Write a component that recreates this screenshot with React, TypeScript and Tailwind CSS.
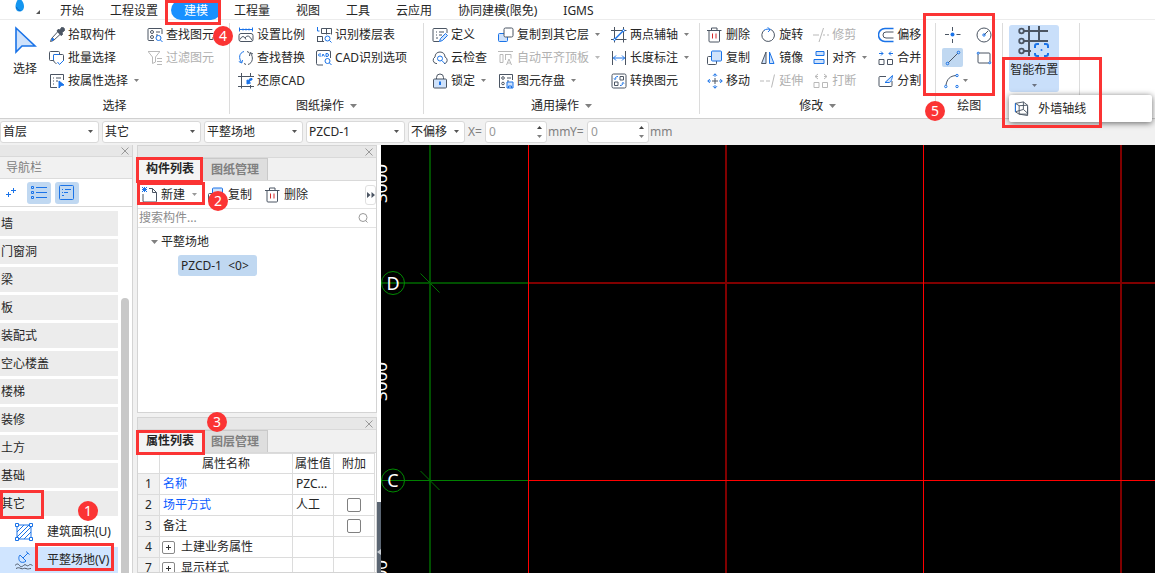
import type { ReactNode } from 'react';

const FONT = "font-['Noto_Sans','Noto_Sans_CJK_SC',sans-serif]";
const D = '#4b5563';
const B = '#1a73e8';
const L = '#cfe2fb';
const G = '#b9b9b9';

const icons: Record<string, ReactNode> = {
  picker: (
    <>
      <path d="M9 4.500l3.500 3.500M8.500 5L2.500 11.500 1.500 14.500l3-1L11 7.500" stroke={D} />
      <path d="M8 4l1-1.500 2 .5L12.500.500 15 1l.500 2.500L13 5.500l.5 2-1.500 1z" fill={D} stroke={D} />
      <path d="M3 11.500l2 .5-2 2z" fill={B} stroke={B} />
    </>
  ),
  batch: (
    <>
      <path d="M4.500 10.500h-3a1 1 0 01-1-1v-7a1 1 0 011-1h8a1 1 0 011 1V4" stroke={D} />
      <path d="M7.500 13.500c-2-.5-3-2-3-4V5.500a1 1 0 011-1h8a1 1 0 011 1v5" stroke={D} />
      <path d="M4.500 10V5.500a1 1 0 011-1h5M8.500 12l2 2.500 4.500-4.500" stroke={B} />
    </>
  ),
  byProp: (
    <>
      <path d="M8 14.500H1.500v-13h13V7M4 5h1M7 5h5M4 8h1M7 8h2M4 11h1" stroke={D} />
      <path d="M10 8l5 4-3 .5-2 2.500z" fill={B} stroke={B} />
    </>
  ),
  find: (
    <>
      <path d="M7 13.500H2a1 1 0 01-1-1v-10a1 1 0 011-1h12a1 1 0 011 1V7M9 5h4M9 8h2" stroke={D} />
      <circle cx="5" cy="5" r="1.500" stroke={D} />
      <circle cx="5" cy="10" r="1.500" stroke={D} />
      <circle cx="11.500" cy="11" r="2.500" stroke={B} />
      <path d="M13.500 13l2 2" stroke={B} />
    </>
  ),
  filter: <path d="M1 1.500h12M1.500 2l4 5v6.500l3-1.500V7l4-5M10 8.500h5M10 11.500h5M10 14.500h5" stroke={G} />,
  scale: (
    <>
      <path d="M1.500.5v4M14.500.5v4M1.500 2.500h13M5 1.500v2M8 1.500v2M11 1.500v2" stroke={B} />
      <path d="M3 6.500h10a2 2 0 012 2v4a2 2 0 01-2 2H3a2 2 0 01-2-2v-4a2 2 0 012-2zM2 12.500q3-6 6 0M7 11q3-5 7 2" stroke={D} />
    </>
  ),
  replace: (
    <>
      <path d="M6 1.500C1 3 .5 8 3.500 12.500M.8 11.500l3 1.500.7-3" stroke={B} />
      <path d="M10 14.500C15 13 15.500 7 12.500 3M15 4l-3-1.500-.5 3.500M9 1.500l2 1M6 13.500l2 1" stroke={D} />
    </>
  ),
  restore: (
    <>
      <path d="M3.500 0v15.500M12.500 0v4M0 3.500h16M0 13.500h16M12.500 12v3.500" stroke={D} />
      <path d="M14 5.500c-2 0-3 .5-3.500 2L9 7v4l3.500-1-1.200-1C12 7.500 13 7 14 7z" fill={B} stroke={B} />
    </>
  ),
  floors: (
    <>
      <path d="M5.500 1.500h10v6M5.500 1.500v5M5.500 6.500h9M10.500 1.500v6M1.500 9.500h5v5h-5M1 14.500h7M1.500 14V9" stroke={D} />
      <path d="M1.500 0v4h2" stroke={B} />
      <circle cx="11.500" cy="11.500" r="2.500" stroke={B} />
      <path d="M13.500 13.500l2 2" stroke={B} />
    </>
  ),
  cad: (
    <>
      <path d="M7 15H2a1.500 1.500 0 01-1.500-1.500V2A1.500 1.500 0 012 .5h11A1.500 1.500 0 0114.500 2v6" stroke={D} />
      <path d="M5 4H3.500a1 1 0 00-1 1v0a1 1 0 001 1H5M6 6.500L7 4l1.500 2.500M10 3.500v3h1a1.500 1.500 0 000-3z" stroke={B} />
      <circle cx="11.500" cy="11" r="2.500" stroke={B} />
      <path d="M13.500 13l2 2" stroke={B} />
    </>
  ),
  define: (
    <>
      <path d="M7 14.500H2a1 1 0 01-1-1v-11a1 1 0 011-1h12a1 1 0 011 1V6M4 5h1M7 5h5M4 8h1M7 8h3M4 11h2" stroke={D} />
      <path d="M7.500 14.500l1-3 5-5 2 2-5 5z" fill={L} stroke={B} />
    </>
  ),
  cloud: (
    <>
      <path d="M5 13.500H4A3.500 3.500 0 013 7C3 4 5 2 8 2s5 2 5 5a3.500 3.500 0 010 6.500h-1" stroke={D} />
      <circle cx="8" cy="8.500" r="2.500" stroke={B} />
      <path d="M9.800 10.500l3 3" stroke={B} />
    </>
  ),
  lock: (
    <>
      <path d="M4.500 6V4.500a3.500 3.500 0 017 0V6" stroke={D} />
      <rect x="1.500" y="6" width="13" height="9" rx="1" fill={L} stroke={D} />
      <path d="M8 8.500v3.500" stroke={B} strokeWidth="2" />
    </>
  ),
  copyTo: (
    <>
      <path d="M6 6.500H1.500a1 1 0 00-1 1v6a1 1 0 001 1h7a1 1 0 001-1V10" fill={L} stroke={B} />
      <rect x="6" y="1" width="9" height="9" rx="1.500" fill="#fff" stroke={D} />
    </>
  ),
  alignTop: <path d="M0 1.500h15M2 4.500h3v8H2zM7.500 4.500H13v4M7.500 4v6M8.500 15l2.500-6 2.500 6M9.500 13h3" stroke={G} />,
  save: (
    <>
      <path d="M7 14.500H1.500v-13h13V7M9 5h4M9 8h2" stroke={D} />
      <circle cx="5" cy="5" r="1.300" stroke={D} />
      <circle cx="5" cy="10.500" r="1.300" stroke={D} />
      <path d="M9 9h6v6H9z" fill={L} stroke={B} />
      <path d="M10.500 15v-2h3v2" stroke={B} />
    </>
  ),
  twoPoint: (
    <>
      <path d="M3.500 0v15.500M12.500 0v15.500M0 3.500h15.500M0 12.500h15.500" stroke={D} />
      <path d="M3 13L13 3" stroke={B} strokeWidth="1.500" />
      <circle cx="3.500" cy="12.500" r="1" stroke={B} fill="#fff" />
      <circle cx="12.500" cy="3.500" r="1" stroke={B} fill="#fff" />
    </>
  ),
  length: (
    <>
      <path d="M1.500 1v14M14.500 1v14" stroke={D} />
      <path d="M2 8h12M5 5.500L2.500 8 5 10.500M11 5.500L13.500 8 11 10.500" stroke={B} />
    </>
  ),
  convert: (
    <>
      <rect x="1" y="1" width="14" height="14" rx="1.500" stroke={D} />
      <path d="M9 3.500h3.500V7H9zM3.500 9H7v3.500H3.500z" stroke={D} />
      <path d="M7 3.500C5 3.500 4 4.500 4 6.500L3 5.500m1 1l1-1M9 12.500c2 0 3-1 3-3l1 1m-1-1l-1 1" stroke={B} />
    </>
  ),
  trash: (
    <>
      <path d="M0 3.500h14.500M4.500 3V1h5.500v2M2 3.500V14a1 1 0 001 1h8.500a1 1 0 001-1V3.500" stroke={D} />
      <path d="M5.500 6.500v5M9 6.500v5" stroke="#d42a2a" />
    </>
  ),
  copy: (
    <>
      <path d="M4 6.500H1.500a1 1 0 00-1 1v6a1 1 0 001 1h7a1 1 0 001-1V11" stroke={D} />
      <rect x="4.500" y="1" width="10" height="10" rx="1" fill={L} stroke={B} />
    </>
  ),
  move: (
    <>
      <path d="M8 5v6M5 8h6" stroke={D} />
      <path d="M8 .8v3M8 12.200v3M.8 8h3M12.200 8h3M6 2.800L8 .8l2 2M6 13.200l2 2 2-2M2.800 6L.8 8l2 2M13.200 6l2 2-2 2" stroke={B} />
    </>
  ),
  rotate: (
    <>
      <path d="M10.500 2.300a6.300 6.300 0 11-6 .7" stroke={D} />
      <path d="M4 3.300C6 2 8 1.800 10.300 2.600M7.500.3l2.800 2.300L8 5" stroke={B} />
    </>
  ),
  mirror: (
    <>
      <path d="M6 2L1.500 13.500H6z" fill={L} stroke={D} />
      <path d="M9.500 2L14 13.500H9.500z" fill={L} stroke={B} />
    </>
  ),
  trim: <path d="M0 8h6M10 8h2M14 8h2M10.500 1L6 15" stroke={G} />,
  extend: <path d="M0 8h4M6 8h4M14.500 1.500l-3 13" stroke={G} />,
  align: (
    <>
      <path d="M3 1.500h8v4H3zM1 9.500h10v4H1z" fill={L} stroke={B} />
      <path d="M14.500 0v15" stroke={D} />
    </>
  ),
  breakUp: (
    <path d="M5 1L2 3.500 5 6M11 1l3 2.500L11 6M2 3.500h3M11 3.500h3M1 9.500h5v5H1zM9.500 9.500h5v5h-5z" stroke={G} />
  ),
  offset: (
    <>
      <path d="M15.500 1.500H7a6 6 0 000 13h8.500" stroke={B} strokeWidth="1.500" />
      <path d="M15.500 5H8a3 3 0 000 6h7.500" stroke={D} />
    </>
  ),
  merge: (
    <>
      <path d="M3 1.500l2 2-2 2M13 1.500l-2 2 2 2M1 3.500h4M11 3.500h4" stroke={B} />
      <path d="M1 9.500h5v5H1zM9.500 9.500h5v5h-5z" stroke={D} />
    </>
  ),
  split: (
    <>
      <path d="M8 3.500H2a1 1 0 00-1 1v8a1 1 0 001 1h11a1 1 0 001-1V8" stroke={D} />
      <path d="M14.500 2.500L7 9.500h4c2 0 3-3 3.500-7z" fill={L} stroke={B} />
    </>
  ),
  point: (
    <>
      <path d="M7.500 0v4M7.500 12v4M0 7.500h4M11.500 7.500h4" stroke={D} />
      <circle cx="7.500" cy="7.500" r="2" fill={B} />
    </>
  ),
  line: (
    <>
      <path d="M3 13L13 3" stroke={D} />
      <circle cx="2.500" cy="13.500" r="1.300" stroke={B} />
      <circle cx="13.500" cy="2.500" r="1.300" stroke={B} />
    </>
  ),
  arc: (
    <>
      <path d="M2 12C3 6 6 3 12 2.500" stroke={D} />
      <circle cx="1.800" cy="13.500" r="1.200" stroke={B} />
      <circle cx="13" cy="2.500" r="1.200" stroke={B} />
      <circle cx="13" cy="13.500" r="1.200" stroke={B} />
    </>
  ),
  circle: (
    <>
      <circle cx="8" cy="8" r="7" stroke={D} />
      <path d="M8 8l4-4" stroke={D} />
      <circle cx="8" cy="8" r="1.200" stroke={B} />
    </>
  ),
  rect: (
    <>
      <rect x="2" y="3" width="12" height="10" rx="1" stroke={D} />
      <circle cx="2.200" cy="3.200" r="1" stroke={B} fill="#fff" />
      <circle cx="13.800" cy="12.800" r="1" stroke={B} fill="#fff" />
    </>
  ),
  wall: (
    <>
      <path d="M1.500 2.500v9l4 2.500V5zM5.500 5l9-.500v9.500l-9 0M1.500 2.500L10 1l4.500 3.500M5.500 14l9 1.500V6M10 1v8l4.500 4M1.500 11.500L10 9" stroke={D} />
      <path d="M1.500 2.500v9" stroke={B} />
    </>
  ),
  newFile: (
    <>
      <path d="M7 1.500h3.500l4 4V14a1 1 0 01-1 1H2a1 1 0 01-1-1V7M10.500 1.500v4h4" stroke={D} />
      <path d="M0 0l5 5M5 0L0 5M2.500 0v5M0 2.500h5" stroke={B} />
    </>
  ),
};

const Ico = ({ name, className = 'size-4' }: { name: string; className?: string }) => (
  <svg viewBox="0 0 16 16" fill="none" className={`${className} shrink-0`} aria-hidden="true">
    {icons[name]}
  </svg>
);

const Caret = ({ className = 'text-[#808080]', wide }: { className?: string; wide?: boolean }) => (
  <svg viewBox="0 0 7 4" className={`h-1 w-[7px] shrink-0 ${className}`} aria-hidden="true">
    <path d={wide ? 'M0 0h7L3.500 4z' : 'M1 0h5L3.500 3z'} fill="currentColor" />
  </svg>
);

type ToolProps = { icon: string; label: string; caret?: boolean; off?: boolean };

const Tool = ({ icon, label, caret, off }: ToolProps) => (
  <button
    disabled={off}
    className="flex h-[23px] items-center gap-[3px] whitespace-nowrap text-[#262626] disabled:text-[#b0b0b0]"
  >
    <Ico name={icon} />
    {label}
    {caret && <Caret className={off ? 'ml-[2px] text-[#b9b9b9]' : 'ml-[2px] text-[#808080]'} />}
  </button>
);

const Column = ({ tools, className = '' }: { tools: ToolProps[]; className?: string }) => (
  <div className={`flex flex-col items-start ${className}`}>
    {tools.map((t) => (
      <Tool key={t.label} {...t} />
    ))}
  </div>
);

const Group = ({ label, caret, className = '', children }: { label?: string; caret?: boolean; className?: string; children: ReactNode }) => (
  <section className="relative mt-[3px] mb-1 shrink-0 border-r border-[#dcdcdc]">
    <div className={`flex h-[69px] ${className}`}>{children}</div>
    {label && (
      <div className="flex h-6 items-center justify-center gap-[6px] pt-[3px]">
        {label}
        {caret && <Caret wide />}
      </div>
    )}
  </section>
);

const tabs = ['开始', '工程设置', '建模', '工程量', '视图', '工具', '云应用', '协同建模(限免)', 'IGMS'];

const MenuBar = () => (
  <nav className="flex h-5 items-start border-b border-[#ececec] bg-white">
    <svg viewBox="0 0 47 20" className="h-5 w-[47px] shrink-0" aria-hidden="true">
      <path d="M17.500 0h4c1.500 2 2.500 4 2.500 6.500 0 3-2 5-4.500 5S15.500 9.500 15.500 6.500C15.500 4 16.500 2 17.500 0z" fill="#1496f0" />
      <path d="M16.500 7c.5 2 2 3.500 4 3.500" stroke="#0b62c4" fill="none" />
      <path d="M40 10v4h-4z" fill="#555" />
    </svg>
    {tabs.map((t) => (
      <a
        key={t}
        href="#"
        className={
          t === '建模'
            ? 'flex h-5 items-center rounded-full bg-[#1890ff] px-[13px] pt-[2px] text-white'
            : 'flex h-5 items-center whitespace-nowrap px-[13px] pt-[2px] text-[#262626]'
        }
      >
        {t}
      </a>
    ))}
  </nav>
);

const Ribbon = () => (
  <header className="flex h-[99px] border-b border-[#d0d0d0] bg-white">
    <Group label="选择" className="pr-[15px]">
      <button className="mr-[11px] ml-3 flex w-[26px] flex-col items-center pt-[3px]">
        <svg viewBox="0 0 24 28" className="h-7 w-6" aria-hidden="true">
          <path d="M3 2v24l6-6h13z" fill={L} stroke={B} strokeWidth="1.600" />
        </svg>
        <span className="mt-[7px] whitespace-nowrap">选择</span>
      </button>
      <Column
        tools={[
          { icon: 'picker', label: '拾取构件' },
          { icon: 'batch', label: '批量选择' },
          { icon: 'byProp', label: '按属性选择', caret: true },
        ]}
      />
      <Column
        className="ml-[7px]"
        tools={[
          { icon: 'find', label: '查找图元' },
          { icon: 'filter', label: '过滤图元', off: true },
        ]}
      />
    </Group>
    <Group label="图纸操作" caret className="gap-[11px] pr-4 pl-2">
      <Column
        tools={[
          { icon: 'scale', label: '设置比例' },
          { icon: 'replace', label: '查找替换' },
          { icon: 'restore', label: '还原CAD' },
        ]}
      />
      <Column
        tools={[
          { icon: 'floors', label: '识别楼层表' },
          { icon: 'cad', label: 'CAD识别选项' },
        ]}
      />
    </Group>
    <Group label="通用操作" caret className="gap-[10px] pr-[9px] pl-2">
      <Column
        className="mr-px"
        tools={[
          { icon: 'define', label: '定义' },
          { icon: 'cloud', label: '云检查' },
          { icon: 'lock', label: '锁定', caret: true },
        ]}
      />
      <Column
        tools={[
          { icon: 'copyTo', label: '复制到其它层', caret: true },
          { icon: 'alignTop', label: '自动平齐顶板', caret: true, off: true },
          { icon: 'save', label: '图元存盘', caret: true },
        ]}
      />
      <Column
        tools={[
          { icon: 'twoPoint', label: '两点辅轴', caret: true },
          { icon: 'length', label: '长度标注', caret: true },
          { icon: 'convert', label: '转换图元' },
        ]}
      />
    </Group>
    <Group label="修改" caret className="gap-[10px] pr-[14px] pl-[7px]">
      <Column
        tools={[
          { icon: 'trash', label: '删除' },
          { icon: 'copy', label: '复制' },
          { icon: 'move', label: '移动' },
        ]}
      />
      <Column
        tools={[
          { icon: 'rotate', label: '旋转' },
          { icon: 'mirror', label: '镜像' },
          { icon: 'extend', label: '延伸', off: true },
        ]}
      />
      <Column
        tools={[
          { icon: 'trim', label: '修剪', off: true },
          { icon: 'align', label: '对齐', caret: true },
          { icon: 'breakUp', label: '打断', off: true },
        ]}
      />
      <Column
        tools={[
          { icon: 'offset', label: '偏移' },
          { icon: 'merge', label: '合并' },
          { icon: 'split', label: '分割' },
        ]}
      />
    </Group>
    <Group label="绘图" className="pr-[10px] pl-[6px]">
      <div className="flex w-[34px] flex-col items-start">
        <button aria-label="点" className="flex h-[23px] w-[21px] items-center justify-center">
          <Ico name="point" />
        </button>
        <button aria-label="直线" className="my-[2px] flex h-[19px] w-[21px] items-center justify-center rounded-[2px] bg-[#c0d8f1]">
          <Ico name="line" />
        </button>
        <button aria-label="三点弧" className="flex h-[23px] items-center gap-[2px] pl-[2px]">
          <Ico name="arc" />
          <Caret />
        </button>
      </div>
      <div className="flex flex-col">
        <button aria-label="圆" className="flex h-[23px] items-center">
          <Ico name="circle" />
        </button>
        <button aria-label="矩形" className="flex h-[23px] items-center">
          <Ico name="rect" />
        </button>
      </div>
    </Group>
    <Group className="pr-5 pl-[6px]">
      <button className="mt-[2px] flex h-[67px] w-[50px] flex-col items-center rounded-[3px] bg-[#c9dffa]">
        <svg viewBox="0 0 32 32" className="size-8 shrink-0" fill="none" aria-hidden="true">
          <path d="M6 6h24M6 16h24M6 26h7M11 1v30M21 1v15" stroke={D} strokeWidth="2" />
          <g fill="#c9dffa" stroke={D} strokeWidth="1.800">
            <circle cx="3.500" cy="6" r="2.300" />
            <circle cx="3.500" cy="16" r="2.300" />
            <circle cx="3.500" cy="26" r="2.300" />
          </g>
          <path d="M17 23v-2a2 2 0 012-2h2M26 19h2a2 2 0 012 2v2M30 28v1a2 2 0 01-2 2h-2M21 31h-2a2 2 0 01-2-2v-1" stroke={B} strokeWidth="2" />
          <circle cx="23.500" cy="25" r="1" fill={B} />
        </svg>
        <span className="mt-[5px] whitespace-nowrap">智能布置</span>
        <Caret className="mt-[6px] text-[#6b7280]" />
      </button>
      <div className="absolute top-[72px] left-[6px] z-10 w-[143px] rounded-[2px] bg-white shadow-[0_1px_6px_rgba(0,0,0,0.6)]">
        <button className="flex h-[27px] w-full items-center gap-[9px] pl-[5px]">
          <Ico name="wall" className="size-[15px]" />
          外墙轴线
        </button>
      </div>
    </Group>
  </header>
);

const Select = ({ value, label, className = 'w-[99px]' }: { value: string; label: string; className?: string }) => (
  <div className={`relative flex items-center ${className}`}>
    <select
      aria-label={label}
      className="h-[22px] w-full appearance-none rounded-[3px] border border-[#d9d9d9] bg-white pl-[2px]"
    >
      <option>{value}</option>
    </select>
    <Caret className="pointer-events-none absolute right-[5px] text-[#555]" />
  </div>
);

const Offset = ({ axis }: { axis: string }) => (
  <label className="flex items-center text-[#808080]">
    <span className="w-[17px]">{axis}=</span>
    <span className="relative flex items-center">
      <input defaultValue="0" className="h-[22px] w-[62px] rounded-[3px] border border-[#d9d9d9] bg-white pl-[3px] text-[#999]" />
      <span className="pointer-events-none absolute right-[4px] flex flex-col gap-[6px] text-[#444]">
        <Caret className="rotate-180" />
        <Caret />
      </span>
    </span>
    <span className="w-[23px] pl-px">mm</span>
  </label>
);

const OptionBar = () => (
  <div className="flex h-[26px] items-center gap-[3px] bg-[#f1f1f1] pb-px">
    <Select label="楼层" value="首层" />
    <Select label="类别" value="其它" />
    <Select label="构件类型" value="平整场地" />
    <Select label="构件" value="PZCD-1" />
    <Select label="偏移方式" value="不偏移" className="w-[57px]" />
    <div className="flex">
      <Offset axis="X" />
      <Offset axis="Y" />
    </div>
  </div>
);

const CloseStrip = () => (
  <div className="flex h-3 shrink-0 items-center justify-end border-b border-[#d9d9d9] bg-[#e7e7e7] pr-[2px]">
    <button aria-label="关闭">
      <svg viewBox="0 0 10 10" className="size-[10px]" aria-hidden="true">
        <path d="M1.500 1.500l7 7M8.500 1.500l-7 7" stroke="#999" />
      </svg>
    </button>
  </div>
);

const categories = ['墙', '门窗洞', '梁', '板', '装配式', '空心楼盖', '楼梯', '装修', '土方', '基础', '其它'];

const Navigator = () => (
  <aside className="flex w-[133px] shrink-0 flex-col overflow-hidden border-r border-[#d4d4d4] bg-white">
    <CloseStrip />
    <h2 className="flex h-[22px] shrink-0 items-center border-b border-[#dcdcdc] bg-[#f1f1f1] pl-[6px] text-[#808080]">导航栏</h2>
    <div className="flex h-7 shrink-0 items-center gap-1 border-b border-[#d9d9d9]">
      <button aria-label="展开" className="flex w-[23px] justify-center">
        <svg viewBox="0 0 12 12" className="size-3" fill="none" stroke={B} aria-hidden="true">
          <path d="M2.500 5v5M0 7.500h5M7.500 1v5M5 3.500h5" />
        </svg>
      </button>
      <button aria-label="列表" className="flex h-[22px] w-6 items-center justify-center rounded-[3px] bg-[#c0d8f1]">
        <svg viewBox="0 0 16 16" className="size-4" fill="none" stroke={B} aria-hidden="true">
          <path d="M5 2.500h11M5 7.500h11M5 12.500h11" />
          <path d="M.5 1.500h2v2h-2zM.5 6.500h2v2h-2zM.5 11.500h2v2h-2z" />
        </svg>
      </button>
      <button aria-label="详情" className="flex h-[22px] w-6 items-center justify-center rounded-[3px] bg-[#c0d8f1]">
        <svg viewBox="0 0 16 16" className="size-4" fill="none" stroke={B} aria-hidden="true">
          <rect x=".5" y=".5" width="14" height="14" rx="1" />
          <path d="M3 4.500h1M6 4.500h6M3 7.500h1M5 7.500h4M3 10.500h2" />
        </svg>
      </button>
    </div>
    <div className="flex min-h-0 flex-1">
      <ul className="flex w-[118px] flex-col gap-[3px] pt-1">
        {categories.map((c) => (
          <li key={c} className="flex h-[25px] shrink-0 items-center bg-[#ececec] pl-px">
            {c}
          </li>
        ))}
        <li className="flex h-[25px] shrink-0 items-center whitespace-nowrap pl-[14px]">
          <svg viewBox="0 0 20 20" className="mr-[13px] size-5 shrink-0" fill="none" stroke={B} aria-hidden="true">
            <path d="M3 3h14v14H3zM3 10l7-7M3 15L15 3M5 17L17 5M10 17l7-7" />
            <path d="M1.500 1.500h3v3h-3zM15.500 1.500h3v3h-3zM1.500 15.500h3v3h-3zM15.500 15.500h3v3h-3z" fill="#fff" />
          </svg>
          建筑面积(U)
        </li>
        <li className="flex h-[26px] shrink-0 items-center whitespace-nowrap bg-[#d0e5ff] pl-[14px]">
          <svg viewBox="0 0 20 20" className="mr-[13px] size-5 shrink-0" fill="none" aria-hidden="true">
            <path d="M9 8l5-5M12 1.500l3.500 3M6 5l6 6c-2 2-5 1.500-6 .5S4 7 6 5z" stroke={B} />
            <path d="M1 15.500c2-2 3-2 4.500 0s3 1 4.500-.5 3 2 4.500.5 2.500-1 4 0M2 18.500c2-1 3-1 5 0s3-1 5 0 3 0 5 0" stroke={D} />
          </svg>
          平整场地(V)
        </li>
      </ul>
      <div className="mt-[91px] ml-[3px] w-2 rounded-t-full bg-[#c8c8c8]" />
    </div>
  </aside>
);

const PanelTabs = ({ items }: { items: string[] }) => (
  <div className="flex h-[23px] shrink-0 border-b border-[#d9d9d9] bg-[#f1f1f1] font-bold" role="tablist">
    <button role="tab" aria-selected="true" className="w-16 bg-[#f4f4f4] text-[#262626]">
      {items[0]}
    </button>
    <button role="tab" aria-selected="false" className="w-[66px] border border-b-0 border-[#c9c9c9] bg-[#dedede] text-[#808080]">
      {items[1]}
    </button>
  </div>
);

const ComponentList = () => (
  <section className="flex h-[268px] shrink-0 flex-col border border-[#d4d4d4] bg-white">
    <CloseStrip />
    <PanelTabs items={['构件列表', '图纸管理']} />
    <div className="flex h-7 shrink-0 items-center border-b border-[#e3e3e3] pl-1">
      <button className="flex items-center gap-[3px]">
        <Ico name="newFile" />
        新建
        <Caret className="ml-[3px] text-[#999]" />
      </button>
      <button className="ml-[10px] flex items-center gap-1">
        <Ico name="copy" />
        复制
      </button>
      <button className="ml-[13px] flex items-center gap-[3px]">
        <Ico name="trash" />
        删除
      </button>
      <button aria-label="更多" className="ml-auto flex h-5 w-[11px] items-center justify-center rounded-[3px] border border-[#e0e0e0]">
        <svg viewBox="0 0 8 6" className="h-[6px] w-2 shrink-0" aria-hidden="true">
          <path d="M0 0l3.500 3L0 6zM4.500 0L8 3 4.500 6z" fill={D} />
        </svg>
      </button>
    </div>
    <div className="flex h-[19px] shrink-0 items-center border-b border-[#e3e3e3] pr-[7px] pl-px">
      <input aria-label="搜索构件" placeholder="搜索构件..." className="min-w-0 flex-1 placeholder:text-[#8c8c8c]" />
      <svg viewBox="0 0 12 12" className="size-3" fill="none" stroke="#999" aria-hidden="true">
        <circle cx="6" cy="5.500" r="4" />
        <path d="M8.500 8.500l2 2" />
      </svg>
    </div>
    <div className="flex flex-col items-start gap-px pt-[2px]">
      <div className="flex h-6 items-center gap-[3px] pl-[13px]">
        <Caret wide />
        平整场地
      </div>
      <div className="ml-10 flex h-[21px] w-[79px] items-center rounded-[3px] bg-[#c0d8f1] pl-[3px] whitespace-pre">{'PZCD-1  <0>'}</div>
    </div>
  </section>
);

type Row = { no: number; name: string; value?: string; link?: boolean; check?: boolean; group?: boolean };

const rows: Row[] = [
  { no: 1, name: '名称', value: 'PZC...', link: true },
  { no: 2, name: '场平方式', value: '人工', link: true, check: true },
  { no: 3, name: '备注', check: true },
  { no: 4, name: '土建业务属性', group: true },
  { no: 7, name: '显示样式', group: true },
];

const PropertyList = () => (
  <section className="mt-1 min-h-0 flex-1 overflow-hidden border border-[#d4d4d4] bg-white">
    <CloseStrip />
    <PanelTabs items={['属性列表', '图层管理']} />
    <table className="-ml-px w-full table-fixed border-collapse [&_td]:border [&_td]:border-[#dcdcdc] [&_th]:border [&_th]:border-[#dcdcdc]">
      <colgroup>
        <col className="w-[22px]" />
        <col />
        <col className="w-[41px]" />
        <col className="w-[41px]" />
      </colgroup>
      <thead>
        <tr className="h-5">
          <th></th>
          <th className="font-normal">属性名称</th>
          <th className="font-normal">属性值</th>
          <th className="font-normal">附加</th>
        </tr>
      </thead>
      <tbody>
        {rows.map((r) => (
          <tr key={r.no} className="h-[21px]">
            <td className="bg-[#f1f1f1] text-center">{r.no}</td>
            <td className={r.link ? 'pl-[3px] text-[#0a5cff]' : 'pl-[3px]'}>
              <span className="flex items-center">
                {r.group && (
                  <button aria-label="展开" className="mr-[6px] -ml-px flex size-[13px] items-center justify-center rounded-[2px] border border-[#888]">
                    <svg viewBox="0 0 5 5" className="size-[5px]" aria-hidden="true">
                      <path d="M2.500 0v5M0 2.500h5" stroke="#333" />
                    </svg>
                  </button>
                )}
                {r.name}
              </span>
            </td>
            <td className="pl-[3px]">{r.value}</td>
            <td>
              {r.check && (
                <input
                  type="checkbox"
                  aria-label={r.name}
                  className="mx-auto block size-[14px] appearance-none rounded-[2px] border border-[#808080] bg-white"
                />
              )}
            </td>
          </tr>
        ))}
      </tbody>
    </table>
  </section>
);

const Drawing = () => (
  <main className="relative min-w-0 flex-1 overflow-hidden bg-black">
    <svg className="absolute inset-0 size-full" shapeRendering="crispEdges" aria-label="轴网">
      <g stroke="#004f00" strokeWidth="2">
        <line x1="49" y1="0" x2="49" y2="100%" />
        <line x1="0" y1="138" x2="147" y2="138" />
      </g>
      <line x1="0" y1="335.500" x2="147" y2="335.500" stroke="#008000" />
      <g stroke="#800000" strokeWidth="2">
        <line x1="147" y1="138" x2="100%" y2="138" />
        <line x1="345" y1="0" x2="345" y2="100%" />
        <line x1="740" y1="0" x2="740" y2="100%" />
      </g>
      <g stroke="#ff0000">
        <line x1="147.500" y1="0" x2="147.500" y2="100%" />
        <line x1="542.500" y1="0" x2="542.500" y2="100%" />
        <line x1="147" y1="335.500" x2="100%" y2="335.500" />
      </g>
      <g stroke="#007000" fill="none" shapeRendering="auto">
        <path d="M39.500 128.500l19 19M39.500 326l19 19" />
        <circle cx="12" cy="138" r="11.500" stroke="#008a00" />
        <circle cx="12" cy="335.500" r="11.500" stroke="#008a00" />
      </g>
      <g fill="#fff" fontSize="18">
        <text x="12" y="145" textAnchor="middle">D</text>
        <text x="12" y="342" textAnchor="middle">C</text>
      </g>
      <g fill="#fff" fontSize="17">
        <text transform="translate(6 58) rotate(-90)">3000</text>
        <text transform="translate(6 256) rotate(-90)">3000</text>
        <text transform="translate(6 454) rotate(-90)">3000</text>
      </g>
    </svg>
  </main>
);

// red frames and numbered badges that lie over the window
const frames = [
  'left-[165px] top-0 h-[25px] w-[56px]',
  'left-[923px] top-[13px] h-[83px] w-[72px]',
  'left-[1002px] top-[57px] h-[71px] w-[100px]',
  'left-[136px] top-[157px] h-[26px] w-[67px]',
  'left-[137px] top-[182px] h-[23px] w-[68px]',
  'left-[136px] top-[430px] h-[25px] w-[69px]',
  'left-0 top-[490px] h-[29px] w-[44px]',
  'left-[35px] top-[543px] h-[28px] w-[79px]',
];

const badges = [
  { n: 1, at: 'left-[78px] top-[501px]' },
  { n: 2, at: 'left-[208px] top-[191px]' },
  { n: 3, at: 'left-[207px] top-[412px]' },
  { n: 4, at: 'left-[213px] top-[26px]' },
  { n: 5, at: 'left-[925px] top-[101px]' },
];

const Annotations = () => (
  <div className="pointer-events-none absolute inset-0 z-20">
    {frames.map((f) => (
      <div key={f} className={`absolute border-3 border-[#fb3434] ${f}`} />
    ))}
    {badges.map((b) => (
      <div key={b.n} className={`absolute flex size-5 items-center justify-center rounded-full bg-[#fb3434] text-[14px] text-white ${b.at}`}>
        {b.n}
      </div>
    ))}
  </div>
);

const App = () => {
  return (
    <div className={`relative flex h-screen flex-col overflow-hidden bg-[#f1f1f1] text-[12px] leading-4 text-[#262626] ${FONT}`}>
      <MenuBar />
      <Ribbon />
      <OptionBar />
      <div className="flex min-h-0 flex-1">
        <Navigator />
        <div className="ml-1 flex w-[240px] shrink-0 flex-col">
          <ComponentList />
          <PropertyList />
        </div>
        <div className="flex w-1 shrink-0 flex-col justify-end bg-white">
          <div className="flex h-[71px] items-center bg-[#5b6673]">
            <svg viewBox="0 0 4 6" className="mt-7 h-[6px] w-1" aria-hidden="true">
              <path d="M4 0v6L0 3z" fill="#c9ced4" />
            </svg>
          </div>
        </div>
        <Drawing />
      </div>
      <Annotations />
    </div>
  );
};

export default App;
